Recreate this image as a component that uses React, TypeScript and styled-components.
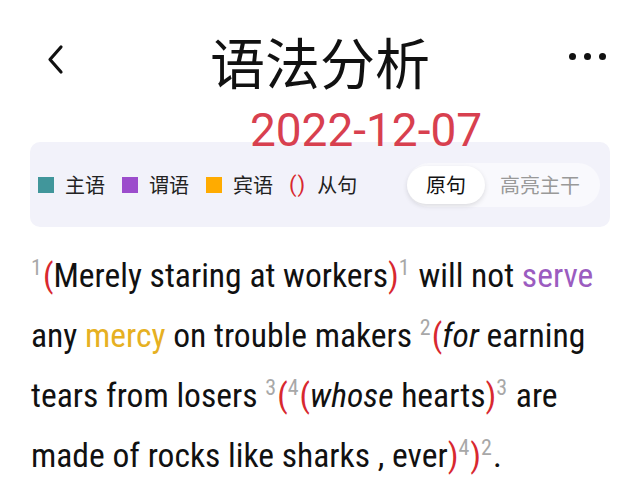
import React from "react";
import styled, { createGlobalStyle } from "styled-components";

const GlobalStyle = createGlobalStyle`
  body {
    margin: 0;
    background: #ffffff;
    font-family: Roboto, "Noto Sans CJK SC", sans-serif;
  }
`;

const Page = styled.div`
  width: 640px;
  height: 497px;
  overflow: hidden;
  background: #fff;
`;

const Header = styled.div`
  display: grid;
  grid-template-columns: 1fr auto 1fr;
  align-items: center;
  height: 80px;
  margin-top: 20px;
  padding: 0 34px;
`;

const BackButton = styled.div`
  display: flex;
  align-items: center;
  justify-self: start;
  padding-left: 10px;
`;

const Title = styled.h1`
  margin: 0;
  font-family: "Noto Sans CJK SC", sans-serif;
  font-weight: 400;
  font-size: 55px;
  line-height: 80px;
  color: #111;
`;

const MoreButton = styled.div`
  display: flex;
  gap: 8px;
  justify-self: end;
  margin-top: -8px;
`;

const Dot = styled.span`
  width: 7px;
  height: 7px;
  border-radius: 50%;
  background: #111;
`;

const DateStamp = styled.div`
  padding-left: 92px;
  text-align: center;
  font-family: Roboto, sans-serif;
  font-size: 46px;
  line-height: 46px;
  color: #d8404f;
  margin-top: 7px;
  margin-bottom: -11px;
`;

const Panel = styled.div`
  margin: 0 30px;
  height: 85px;
  border-radius: 10px;
  background: #f2f2fa;
  display: flex;
  align-items: center;
  justify-content: space-between;
  padding: 0 10px 0 8px;
`;

const Legend = styled.div`
  display: flex;
  align-items: center;
  gap: 17px;
`;

const LegendItem = styled.div`
  display: flex;
  align-items: center;
  gap: 11px;
  font-family: "Noto Sans CJK SC", sans-serif;
  font-size: 20px;
  color: #222;
`;

const Swatch = styled.span<{ $color: string }>`
  width: 16px;
  height: 16px;
  background: ${(p) => p.$color};
`;

const ParenMark = styled.span`
  color: #d8282f;
  font-family: Roboto, sans-serif;
  font-size: 22px;
  letter-spacing: 1px;
  margin-left: -1px;
`;

const Toggle = styled.div`
  display: flex;
  align-items: center;
  height: 44px;
  border-radius: 22px;
  background: #f9f9fd;
  padding-right: 20px;
`;

const ToggleOption = styled.div<{ $active?: boolean }>`
  display: flex;
  align-items: center;
  justify-content: center;
  height: 38px;
  padding: 0 ${(p) => (p.$active ? "19px" : "0 0 15px")};
  border-radius: 19px;
  font-family: "Noto Sans CJK SC", sans-serif;
  font-size: 20px;
  color: ${(p) => (p.$active ? "#111" : "#999")};
  background: ${(p) => (p.$active ? "#fff" : "transparent")};
  box-shadow: ${(p) => (p.$active ? "0 2px 5px rgba(0,0,0,0.12)" : "none")};
`;

const Sentence = styled.div`
  margin-top: 19px;
  padding: 0 20px 0 31px;
  font-family: "Roboto Condensed", Roboto, sans-serif;
  font-size: 33.6px;
  color: #111;
`;

const Line = styled.div`
  height: 60px;
  line-height: 60px;
  white-space: nowrap;
`;

const Sup = styled.sup`
  font-size: 22px;
  color: #a8a8a8;
  vertical-align: 12px;
  line-height: 0;
  margin-right: 1px;
`;

const Paren = styled.span`
  color: #d8282f;
`;

const Word = styled.span<{ $color: string }>`
  color: ${(p) => p.$color};
`;

export default function App() {
  return (
    <Page>
      <GlobalStyle />
      <Header>
        <BackButton>
          <svg width="24" height="32" viewBox="0 0 24 32">
            <path
              d="M17 3 L6 15.5 L17 28"
              fill="none"
              stroke="#111"
              strokeWidth="3.2"
              strokeLinecap="round"
              strokeLinejoin="round"
            />
          </svg>
        </BackButton>
        <Title>语法分析</Title>
        <MoreButton>
          <Dot />
          <Dot />
          <Dot />
        </MoreButton>
      </Header>
      <DateStamp>2022-12-07</DateStamp>
      <Panel>
        <Legend>
          <LegendItem>
            <Swatch $color="#41969b" />
            主语
          </LegendItem>
          <LegendItem>
            <Swatch $color="#9c4dcc" />
            谓语
          </LegendItem>
          <LegendItem>
            <Swatch $color="#ffab00" />
            宾语
          </LegendItem>
          <LegendItem>
            <ParenMark>()</ParenMark>
            从句
          </LegendItem>
        </Legend>
        <Toggle>
          <ToggleOption $active>原句</ToggleOption>
          <ToggleOption>高亮主干</ToggleOption>
        </Toggle>
      </Panel>
      <Sentence>
        <Line>
          <Sup>1</Sup>
          <Paren>(</Paren>Merely staring at workers<Paren>)</Paren>
          <Sup>1</Sup> will not <Word $color="#9b5cc0">serve</Word>
        </Line>
        <Line>
          any <Word $color="#e6b022">mercy</Word> on trouble makers{" "}
          <Sup>2</Sup>
          <Paren>(</Paren>
          <i>for</i> earning
        </Line>
        <Line>
          tears from losers <Sup>3</Sup>
          <Paren>(</Paren>
          <Sup>4</Sup>
          <Paren>(</Paren>
          <i>whose</i> hearts<Paren>)</Paren>
          <Sup>3</Sup> are
        </Line>
        <Line>
          made of rocks like sharks , ever<Paren>)</Paren>
          <Sup>4</Sup>
          <Paren>)</Paren>
          <Sup>2</Sup>.
        </Line>
      </Sentence>
    </Page>
  );
}
